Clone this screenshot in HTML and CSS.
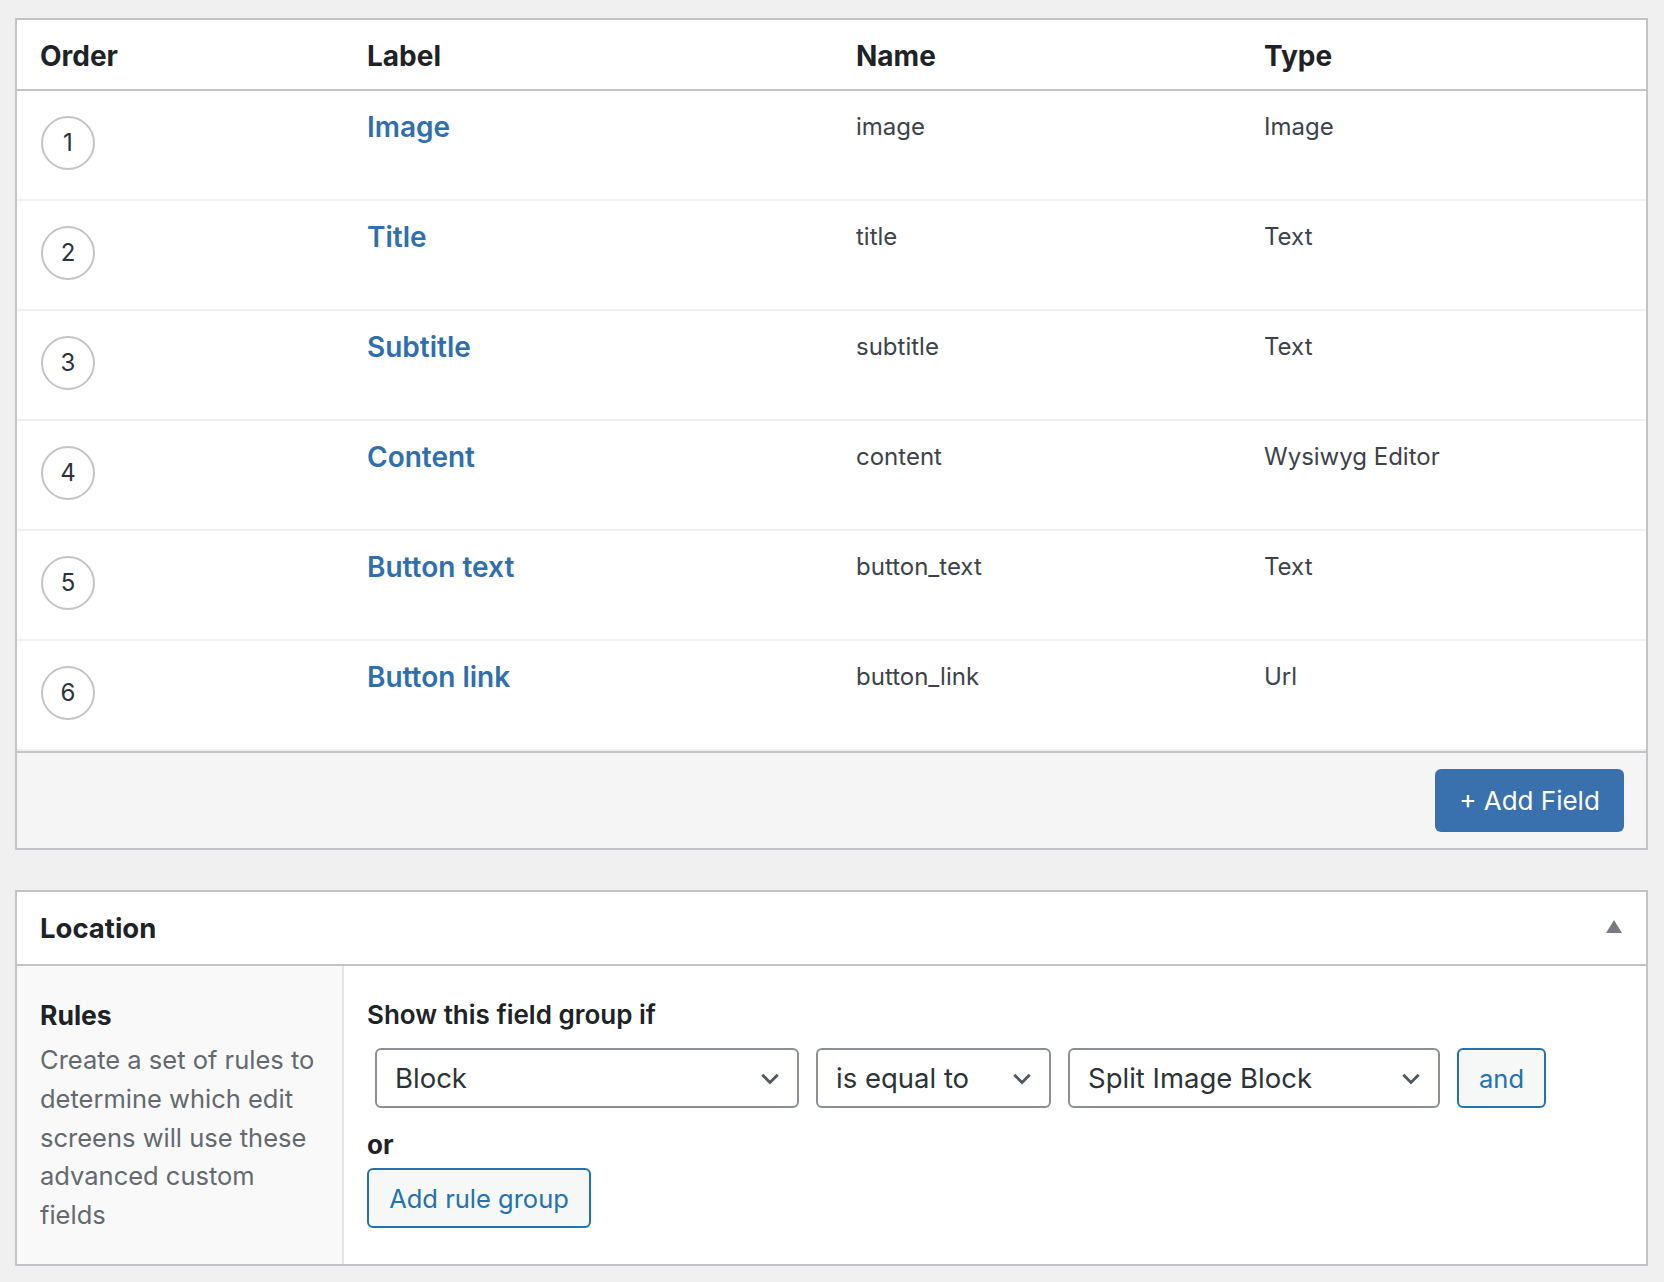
FILE: index.html
```html
<!DOCTYPE html>
<html lang="en">
<head>
<meta charset="utf-8">
<title>Field Group</title>
<link rel="stylesheet" href="styles.css">
</head>
<body>
<div class="page">
  <section class="panel fields">
    <div class="fields-head">
      <div class="col">Order</div>
      <div class="col">Label</div>
      <div class="col">Name</div>
      <div class="col">Type</div>
    </div>
    <div class="field-row">
      <div class="col"><span class="order">1</span></div>
      <div class="col"><a class="field-label" href="#">Image</a></div>
      <div class="col">image</div>
      <div class="col">Image</div>
    </div>
    <div class="field-row">
      <div class="col"><span class="order">2</span></div>
      <div class="col"><a class="field-label" href="#">Title</a></div>
      <div class="col">title</div>
      <div class="col">Text</div>
    </div>
    <div class="field-row">
      <div class="col"><span class="order">3</span></div>
      <div class="col"><a class="field-label" href="#">Subtitle</a></div>
      <div class="col">subtitle</div>
      <div class="col">Text</div>
    </div>
    <div class="field-row">
      <div class="col"><span class="order">4</span></div>
      <div class="col"><a class="field-label" href="#">Content</a></div>
      <div class="col">content</div>
      <div class="col">Wysiwyg Editor</div>
    </div>
    <div class="field-row">
      <div class="col"><span class="order">5</span></div>
      <div class="col"><a class="field-label" href="#">Button text</a></div>
      <div class="col">button_text</div>
      <div class="col">Text</div>
    </div>
    <div class="field-row">
      <div class="col"><span class="order">6</span></div>
      <div class="col"><a class="field-label" href="#">Button link</a></div>
      <div class="col">button_link</div>
      <div class="col">Url</div>
    </div>
    <div class="fields-foot">
      <button class="btn-primary" type="button">+ Add Field</button>
    </div>
  </section>

  <section class="panel location">
    <div class="location-head">
      <h2 class="location-title">Location</h2>
      <span class="toggle"></span>
    </div>
    <div class="location-body">
      <div class="rules-info">
        <div class="rules-title">Rules</div>
        <p class="rules-desc">Create a set of rules to determine which edit screens will use these advanced custom fields</p>
      </div>
      <div class="rules-main">
        <div class="rules-label">Show this field group if</div>
        <div class="rule-line">
          <div class="select w-block">Block<svg class="chev" viewBox="0 0 20 20"><path d="M3 7 L10 14 L17 7" /></svg></div>
          <div class="select w-op">is equal to<svg class="chev" viewBox="0 0 20 20"><path d="M3 7 L10 14 L17 7" /></svg></div>
          <div class="select w-val">Split Image Block<svg class="chev" viewBox="0 0 20 20"><path d="M3 7 L10 14 L17 7" /></svg></div>
          <button class="btn-secondary btn-and" type="button">and</button>
        </div>
        <div class="or-label">or</div>
        <button class="btn-secondary btn-group" type="button">Add rule group</button>
      </div>
    </div>
  </section>
</div>
</body>
</html>
```

FILE: styles.css
```css
* { box-sizing: border-box; }

html, body {
  margin: 0;
  background: #f0f0f1;
}

body {
  font-family: Inter, "Noto Sans", "Liberation Sans", sans-serif;
  color: #3c434a;
  font-size: 24px;
}

.page {
  padding: 18px 16px 17px 15px;
}

.panel {
  background: #fff;
  border: 2px solid #c3c4c7;
}

/* ---------- fields table ---------- */
.fields-head,
.field-row {
  display: grid;
  grid-template-columns: 327px 489px 408px 1fr;
}

.fields-head {
  height: 71px;
  padding-top: 3px;
  align-items: center;
  border-bottom: 2px solid #c3c4c7;
  font-size: 28px;
  font-weight: 700;
  color: #1d2327;
}

.col {
  padding: 0 23px;
}

.field-row {
  height: 110px;
  padding-top: 19px;
  border-bottom: 2px solid #f0f0f1;
  line-height: 34px;
}

.field-row:last-of-type {
  border-bottom: none;
  height: 108px;
}

.order {
  display: flex;
  align-items: center;
  justify-content: center;
  width: 54px;
  height: 54px;
  margin-top: 6px;
  margin-left: 1px;
  border: 2px solid #c3c4c7;
  border-radius: 50%;
  color: #2c3338;
  font-size: 24px;
}

.field-label {
  color: #2f6fae;
  font-weight: 600;
  font-size: 28px;
  text-decoration: none;
}

.fields-foot {
  display: flex;
  justify-content: flex-end;
  padding: 16px 22px 16px;
  background: #f5f5f5;
  border-top: 2px solid #c3c4c7;
}

.btn-primary {
  height: 63px;
  width: 189px;
  border: none;
  border-radius: 6px;
  background: #3871ad;
  color: #fff;
  font: inherit;
  font-size: 26px;
}

/* ---------- location ---------- */
.location {
  margin-top: 40px;
}

.location-head {
  display: flex;
  align-items: center;
  justify-content: space-between;
  height: 74px;
  padding: 0 24px 0 23px;
  border-bottom: 2px solid #c3c4c7;
}

.location-title {
  margin: 0;
  font-size: 27.5px;
  font-weight: 700;
  color: #1d2327;
}

.toggle {
  width: 0;
  height: 0;
  border-left: 8px solid transparent;
  border-right: 8px solid transparent;
  border-bottom: 13px solid #787c82;
  margin-top: -4px;
}

.location-body {
  display: grid;
  grid-template-columns: 327px 1fr;
}

.rules-info {
  background: #f9f9f9;
  border-right: 2px solid #e2e4e7;
  padding: 32px 18px 28px 23px;
}

.rules-title {
  font-size: 26.5px;
  font-weight: 700;
  color: #1d2327;
  line-height: 34px;
  margin-bottom: 9px;
}

.rules-desc {
  margin: 0;
  color: #646970;
  font-size: 25.5px;
  line-height: 38.8px;
}

.rules-main {
  padding: 32px 22px 36px 23px;
}

.rules-label {
  font-size: 26px;
  font-weight: 600;
  color: #1d2327;
  line-height: 34px;
}

.rule-line {
  display: flex;
  gap: 17px;
  margin-top: 16px;
  padding-left: 8px;
}

.select {
  display: flex;
  align-items: center;
  justify-content: space-between;
  height: 60px;
  padding: 0 16px 0 18px;
  border: 2px solid #8c8f94;
  border-radius: 6px;
  background: #fff;
  color: #2c3338;
  font-size: 27.5px;
}

.w-block { width: 424px; }
.w-op { width: 235px; }
.w-val { width: 372px; }

.chev {
  width: 22px;
  height: 22px;
  fill: none;
  stroke: #50575e;
  stroke-width: 2.6;
}

.btn-secondary {
  height: 60px;
  border: 2px solid #2271b1;
  border-radius: 6px;
  background: #f6f7f7;
  color: #2271b1;
  font: inherit;
  font-size: 25.5px;
  padding: 0 19px;
  white-space: nowrap;
}

.btn-and { width: 89px; padding: 0; }

.or-label {
  margin-top: 20px;
  font-size: 26px;
  font-weight: 700;
  color: #1d2327;
  line-height: 34px;
}

.btn-group {
  margin-top: 6px;
  width: 224px;
  padding: 0;
}
```
